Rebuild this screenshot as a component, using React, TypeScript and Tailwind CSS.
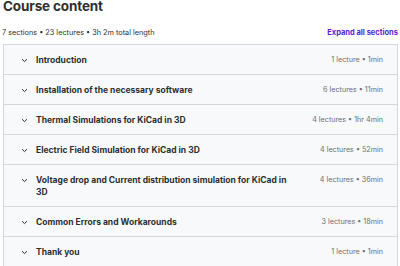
import React from "react";

const sections = [
  { title: "Introduction", meta: "1 lecture • 1min" },
  { title: "Installation of the necessary software", meta: "6 lectures • 11min" },
  { title: "Thermal Simulations for KiCad in 3D", meta: "4 lectures • 1hr 4min" },
  { title: "Electric Field Simulation for KiCad in 3D", meta: "4 lectures • 52min" },
  { title: "Voltage drop and Current distribution simulation for KiCad in 3D", meta: "4 lectures • 36min" },
  { title: "Common Errors and Workarounds", meta: "3 lectures • 18min" },
  { title: "Thank you", meta: "1 lecture • 1min" },
];

function Chevron() {
  return (
    <svg width="7" height="5" viewBox="0 0 7 5" className="shrink-0">
      <path d="M1 1.2 L3.5 3.6 L6 1.2" fill="none" stroke="#2d2f31" strokeWidth="1" />
    </svg>
  );
}

export default function App() {
  return (
    <div className="w-[400px] h-[266px] bg-white overflow-hidden text-[#2d2f31]" style={{ fontFamily: "Inter, 'Noto Sans', sans-serif" }}>
      <div className="pl-[3px] pr-[2px]">
        <h2 className="text-[13.5px] leading-[14px] font-bold tracking-[-0.01em] -mt-[1px]">Course content</h2>
        <div className="flex items-center justify-between mt-[14px]">
          <span className="text-[7.3px] leading-[12px] text-[#2d2f31] -ml-[1px]">7 sections • 23 lectures • 3h 2m total length</span>
          <span className="text-[7.5px] leading-[12px] font-bold text-[#5624d0]">Expand all sections</span>
        </div>
        <div className="mt-[5px] border border-[#d1d7dc]">
          {sections.map((s, i) => (
            <div key={i} className={`flex items-start bg-[#f7f9fa] pl-[17px] pr-[14px] pt-[9px] pb-[8px] ${i > 0 ? "border-t border-[#d1d7dc]" : ""}`}>
              <div className="h-[12px] flex items-center">
                <Chevron />
              </div>
              <div className="flex-1 ml-[8px] mr-[20px]">
                <div className="max-w-[264px] text-[8.5px] leading-[12px] font-bold">{s.title}</div>
              </div>
              <div className="shrink-0 text-[7.2px] leading-[12px] text-[#6a6f73]">{s.meta}</div>
            </div>
          ))}
        </div>
      </div>
    </div>
  );
}
